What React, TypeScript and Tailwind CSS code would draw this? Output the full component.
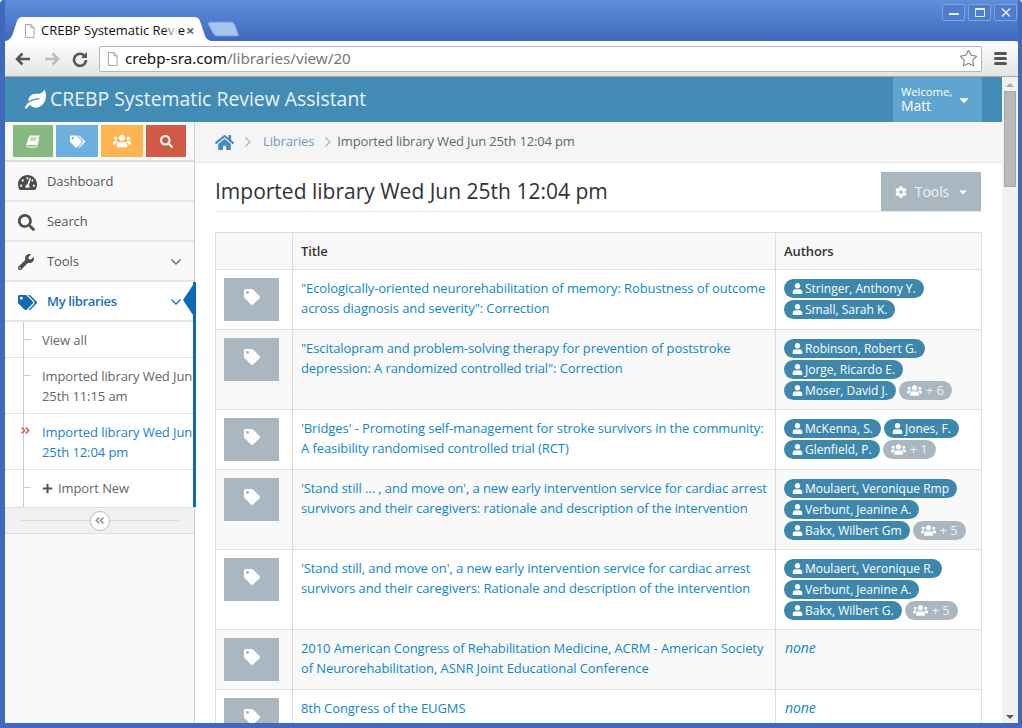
import { FaAngleDoubleLeft, FaAngleDoubleRight, FaCaretDown, FaCog, FaHome, FaLeaf, FaPlus, FaSearch, FaTachometerAlt, FaTag, FaTags, FaUser, FaUsers, FaWrench } from "react-icons/fa";
import { Star } from "lucide-react";
import type { ReactNode } from "react";

interface Row {
  title: string[];
  authors: string[][];
  more?: number;
  h: string;
}

const rows: Row[] = [
  {
    title: ['"Ecologically-oriented neurorehabilitation of memory: Robustness of outcome', 'across diagnosis and severity": Correction'],
    authors: [["Stringer, Anthony Y."], ["Small, Sarah K."]],
    h: "h-[60px]",
  },
  {
    title: ['"Escitalopram and problem-solving therapy for prevention of poststroke', 'depression: A randomized controlled trial": Correction'],
    authors: [["Robinson, Robert G."], ["Jorge, Ricardo E."], ["Moser, David J."]],
    more: 6,
    h: "h-[80px]",
  },
  {
    title: ["'Bridges' - Promoting self-management for stroke survivors in the community:", "A feasibility randomised controlled trial (RCT)"],
    authors: [["McKenna, S.", "Jones, F."], ["Glenfield, P."]],
    more: 1,
    h: "h-[60px]",
  },
  {
    title: ["'Stand still ... , and move on', a new early intervention service for cardiac arrest", "survivors and their caregivers: rationale and description of the intervention"],
    authors: [["Moulaert, Veronique Rmp"], ["Verbunt, Jeanine A."], ["Bakx, Wilbert Gm"]],
    more: 5,
    h: "h-[80px]",
  },
  {
    title: ["'Stand still, and move on', a new early intervention service for cardiac arrest", "survivors and their caregivers: Rationale and description of the intervention"],
    authors: [["Moulaert, Veronique R."], ["Verbunt, Jeanine A."], ["Bakx, Wilbert G."]],
    more: 5,
    h: "h-[80px]",
  },
  {
    title: ["2010 American Congress of Rehabilitation Medicine, ACRM - American Society", "of Neurorehabilitation, ASNR Joint Educational Conference"],
    authors: [],
    h: "h-[60px]",
  },
  {
    title: ["8th Congress of the EUGMS"],
    authors: [],
    h: "h-[60px]",
  },
];

const PageIcon = ({ className }: { className: string }) => (
  <svg viewBox="0 0 12 15" className={className} fill="#fff" stroke="#9a9a9a">
    <path d="M1.5.5h6l3.5 3.5v10.500h-9.500zM7.500.5v3.500h3.500" />
  </svg>
);

const ChevronDown = ({ color }: { color: string }) => (
  <svg width="10" height="6" viewBox="0 0 10 6" fill="none" stroke={color} strokeWidth="1.300">
    <path d="M.5.500L5 5l4.500-4.500" />
  </svg>
);

const ChevronRight = () => (
  <svg width="6" height="10" viewBox="0 0 6 10" fill="none" stroke="#b0b0b0" strokeWidth="1.200">
    <path d="M.5.500L5 5 .5 9.500" />
  </svg>
);

const Badge = ({ name }: { name: string }) => (
  <span className="inline-flex h-[19px] items-center gap-[2px] rounded-full bg-[#3d87ad] pl-[8px] pr-[8px] text-[12px] tracking-normal text-white">
    <FaUser className="text-[11px]" />
    {name}
  </span>
);

const NavItem = ({ icon, label, chevron }: { icon: ReactNode; label: string; chevron?: boolean }) => (
  <div className="flex h-[40px] items-center border-b-2 border-[#e6e6e6] pl-[13px] pr-[13px] pt-[2px] text-[13px] text-[#555]">
    <span className="flex w-[29px] text-[19px] text-[#4d4d4d]">{icon}</span>
    <span className="flex-1">{label}</span>
    {chevron && <ChevronDown color="#666" />}
  </div>
);

const SubItem = ({ children, active }: { children: ReactNode; active?: boolean }) => (
  <div className={`relative whitespace-nowrap border-b border-dotted border-[#ccc] pb-[7px] pl-[37px] pt-[8px] leading-[20px] ${active ? "text-[#1a7fd0]" : "text-[#666]"}`}>
    {active ? (
      <FaAngleDoubleRight className="absolute left-[15px] top-[11px] text-[11px] text-[#d9694f]" />
    ) : (
      <span className="absolute left-[18px] top-[17px] h-px w-[8px] bg-[#c4ccd2]" />
    )}
    {children}
  </div>
);

const App = () => {
  return (
    <div className="flex h-[728px] w-[1022px] flex-col overflow-hidden rounded-t-[4px] border-b-[5px] border-l-[5px] border-r-[4px] border-[#3f69bd] bg-[#3f69bd] font-['Open_Sans',sans-serif] text-[13px] tracking-[-0.09px]">
      {/* window title bar with tabs */}
      <div className="relative flex h-[41px] shrink-0 items-start justify-end bg-gradient-to-b from-[#5f8edb] to-[#3f69bd] pr-[1px] pt-[4px]">
        <svg className="absolute -left-[5px] top-[15px]" width="245" height="26" viewBox="0 0 245 26">
          <path d="M4 26C9 26 12 23 14 15L17 6C18 3 20 2 24 2H193C197 2 199 3 200 6L204 18C206 24 208 26 213 26Z" fill="#fff" />
          <path d="M208 9C208 8 209 7 211 7H230C233 7 234 8 235 10L239 21H217C215 21 214 20 213 18Z" fill="#a8c5ef" stroke="#6f96d8" />
        </svg>
        <div className="absolute left-[19px] top-[21px] flex w-[172px] items-center">
          <PageIcon className="mr-[6px] h-[14px] w-[11px] shrink-0" />
          <span className="relative w-[137px] whitespace-nowrap text-[13px] tracking-normal text-[#111]">
            CREBP Systematic Revie
            <span className="absolute right-0 top-0 h-full w-[14px] bg-gradient-to-r from-transparent to-white" />
          </span>
          <span className="ml-[8px] text-[15px] font-bold leading-none text-[#666]">×</span>
        </div>
        <div className="flex gap-[3px]">
          {["min", "max", "close"].map((b) => (
            <div key={b} className="flex h-[17px] w-[23px] items-center justify-center rounded-[2px] border border-[#7fa2e0] bg-[#4f7ccb]">
              {b === "min" && <span className="mt-[3px] h-[2px] w-[10px] bg-[#e6eefb]" />}
              {b === "max" && <span className="h-[9px] w-[10px] rounded-[1px] border border-t-2 border-[#e6eefb]" />}
              {b === "close" && (
                <svg width="10" height="9" viewBox="0 0 10 9" stroke="#e6eefb" strokeWidth="1.500">
                  <path d="M1 0.500L9 8.500M9 0.500L1 8.500" />
                </svg>
              )}
            </div>
          ))}
        </div>
      </div>

      {/* browser toolbar */}
      <div className="flex h-[36px] shrink-0 items-center rounded-tr-[2px] border-b border-[#a8a8a8] bg-gradient-to-b from-[#ffffff] to-[#e4e4e4] pl-[9px] pr-[11px]">
        <svg width="18" height="16" viewBox="0 0 18 16" fill="none" stroke="#555" strokeWidth="2.500">
          <path d="M16 8H3M8.500 2.500L3 8l5.500 5.500" />
        </svg>
        <svg className="ml-[11px]" width="18" height="16" viewBox="0 0 18 16" fill="none" stroke="#bdbdbd" strokeWidth="2.500">
          <path d="M2 8h13M9.500 2.500L15 8l-5.500 5.500" />
        </svg>
        <svg className="ml-[11px]" width="16" height="16" viewBox="0 0 16 16" fill="none" stroke="#555" strokeWidth="2.600">
          <path d="M13 5.500A6 6 0 1 0 14 9" />
          <path d="M15 1v6H9z" fill="#555" stroke="none" />
        </svg>
        <div className="ml-[11px] flex h-[26px] flex-1 items-center rounded-[2px] border border-[#b5b5b5] bg-white pl-[7px] pr-[3px] font-['Noto_Sans',sans-serif] text-[15.200px] tracking-normal">
          <PageIcon className="mr-[7px] h-[14px] w-[11px]" />
          <span className="text-[#111]">crebp-sra.com</span>
          <span className="text-[#777]">/libraries/view/20</span>
          <Star className="ml-auto h-[19px] w-[19px] text-[#777]" strokeWidth={1.300} />
        </div>
        <div className="ml-[12px] flex w-[13px] flex-col gap-[2px]">
          <span className="h-[3px] rounded-sm bg-[#555]" />
          <span className="h-[3px] rounded-sm bg-[#555]" />
          <span className="h-[3px] rounded-sm bg-[#555]" />
        </div>
      </div>

      <div className="flex min-h-0 flex-1 bg-white">
        <div className="flex min-w-0 flex-1 flex-col">
          {/* app header */}
          <div className="flex h-[45px] shrink-0 items-center bg-[#428bb5] pl-[20px] pr-[20px] text-white">
            <FaLeaf className="mr-[4px] text-[21px]" />
            <span className="flex-1 pb-[1px] text-[19.400px] tracking-normal text-[#e8f3f9]">CREBP Systematic Review Assistant</span>
            <div className="flex h-[45px] w-[89px] items-center bg-[#60a5cf] pl-[8px]">
              <div className="flex-1">
                <div className="text-[11.200px] leading-[12px] tracking-normal">Welcome,</div>
                <div className="text-[14px] leading-[16px]">Matt</div>
              </div>
              <FaCaretDown className="mr-[11px] text-[14px]" />
            </div>
          </div>

          <div className="flex min-h-0 flex-1">
            {/* sidebar */}
            <div className="flex w-[190px] shrink-0 flex-col border-r border-[#d0d0d0] bg-[#f9f9f9]">
              <div className="flex h-[40px] items-center gap-[3px] border-b-2 border-[#dcdcdc] pl-[8px] text-white">
                <div className="flex h-[32px] w-[40px] items-center justify-center bg-[#86b97f]">
                  <svg width="14" height="13" viewBox="0 0 14 13" fill="none">
                    <path d="M3.500 0.500H13.500L10.500 10H1C0 10 0.500 9 1 7.500Z" fill="#fff" />
                    <path d="M1 10C0.500 11.500 1 12 2 12H10.500L13 4" stroke="#fff" strokeWidth="1" />
                    <path d="M4.500 3H10.500M4 5H10" stroke="#86b97f" />
                  </svg>
                </div>
                <div className="flex h-[32px] w-[42px] items-center justify-center bg-[#6bb0de]">
                  <FaTags className="text-[15px]" />
                </div>
                <div className="flex h-[32px] w-[42px] items-center justify-center bg-[#ffb54f]">
                  <FaUsers className="text-[18px]" />
                </div>
                <div className="flex h-[32px] w-[40px] items-center justify-center bg-[#d05a46]">
                  <FaSearch className="text-[13px]" />
                </div>
              </div>
              <NavItem icon={<FaTachometerAlt />} label="Dashboard" />
              <NavItem icon={<FaSearch className="text-[17px]" />} label="Search" />
              <NavItem icon={<FaWrench className="text-[16px]" />} label="Tools" chevron />
              <div className="relative -mr-[2px] border-r-[3px] border-[#0f6ab4] bg-white">
                <div className="flex h-[40px] items-center border-b-2 border-[#e6e6e6] pl-[13px] pr-[12px] pt-[2px] font-semibold tracking-[-0.35px] text-[#1a6fb5]">
                  <FaTags className="w-[29px] pr-[10px] text-[19px] text-[#0f6ab4]" />
                  <span className="flex-1">My libraries</span>
                  <ChevronDown color="#1a6fb5" />
                </div>
                <span className="absolute right-0 top-[3px] h-0 w-0 border-y-[15px] border-r-[10px] border-y-transparent border-r-[#0f6ab4]" />
                <div className="relative">
                  <span className="absolute bottom-0 left-[18px] top-0 w-px bg-[#c4ccd2]" />
                  <SubItem>View all</SubItem>
                  <SubItem>
                    Imported library Wed Jun
                    <br />
                    25th 11:15 am
                  </SubItem>
                  <SubItem active>
                    Imported library Wed Jun
                    <br />
                    25th 12:04 pm
                  </SubItem>
                  <div className="relative flex h-[37px] items-center gap-[5px] pl-[37px] text-[#666]">
                    <span className="absolute left-[18px] top-[17px] h-px w-[8px] bg-[#c4ccd2]" />
                    <FaPlus className="text-[11px] text-[#555]" />
                    Import New
                  </div>
                </div>
              </div>
              <div className="relative flex h-[27px] items-center justify-center border-y border-[#dedede] bg-[#f1f1f1]">
                <span className="mx-[15px] h-px flex-1 bg-[#dcdcdc]" />
                <span className="absolute flex h-[20px] w-[20px] items-center justify-center rounded-full border border-[#bbb] bg-white text-[11px] text-[#999]">
                  <FaAngleDoubleLeft />
                </span>
              </div>
            </div>

            {/* main column */}
            <div className="min-w-0 flex-1 overflow-hidden">
              <div className="flex h-[41px] items-center border-b border-[#e5e5e5] bg-[#f5f5f5] pl-[20px] tracking-[-0.15px] text-[#666]">
                <FaHome className="text-[19px] text-[#4a8ab8]" />
                <span className="ml-[11px] mr-[12px]">
                  <ChevronRight />
                </span>
                <span className="text-[#6a9cc4]">Libraries</span>
                <span className="ml-[11px] mr-[6px]">
                  <ChevronRight />
                </span>
                <span>Imported library Wed Jun 25th 12:04 pm</span>
              </div>
              <div className="px-[20px]">
                <div className="flex h-[49px] items-end justify-between border-b border-[#e5e5e5]">
                  <h1 className="pb-[5px] text-[21px] leading-[30px] tracking-normal text-[#333]">Imported library Wed Jun 25th 12:04 pm</h1>
                  <div className="mr-[1px] flex h-[39px] w-[100px] items-center justify-center gap-[8px] bg-[#aab7c1] pl-[2px] text-[14px] text-[#eef2f4]">
                    <FaCog className="text-[12px] text-white" />
                    Tools
                    <FaCaretDown className="text-[12px] text-white" />
                  </div>
                </div>
                <div className="mt-[20px] border border-b-0 border-[#ddd]">
                  <div className="flex h-[37px] border-b border-[#ddd] bg-[#f9f9f9] font-semibold text-[#333]">
                    <div className="w-[77px] shrink-0 border-r border-[#ddd]" />
                    <div className="flex w-[483px] shrink-0 items-center border-r border-[#ddd] pl-[8px] pt-[1px]">Title</div>
                    <div className="flex flex-1 items-center pl-[8px] pt-[1px]">Authors</div>
                  </div>
                  {rows.map((row, i) => (
                    <div key={row.title[0]} className={`flex border-b border-[#ddd] ${row.h} ${i % 2 ? "bg-[#f9f9f9]" : "bg-white"}`}>
                      <div className="w-[77px] shrink-0 border-r border-[#ddd] pl-[8px] pt-[8px]">
                        <div className="flex h-[43px] w-[55px] items-center justify-center bg-[#aab7c1] pb-[5px] text-white">
                          <FaTag className="text-[16px]" />
                        </div>
                      </div>
                      <div className="w-[483px] shrink-0 whitespace-nowrap border-r border-[#ddd] pl-[8px] pt-[8px] leading-[20px] text-[#0e87c9]">
                        {row.title.map((line) => (
                          <div key={line}>{line}</div>
                        ))}
                      </div>
                      <div className="flex-1 pl-[8px] pt-[8px]">
                        {row.authors.length === 0 && <em className="ml-[1px] text-[14px] leading-[20px] text-[#0e87c9]">none</em>}
                        <div className="mt-[1px] flex flex-col gap-[2px]">
                          {row.authors.map((line, j) => (
                            <div key={line[0]} className="flex gap-[3px]">
                              {line.map((name) => (
                                <Badge key={name} name={name} />
                              ))}
                              {j === row.authors.length - 1 && row.more && (
                                <span className="inline-flex h-[19px] items-center gap-[4px] rounded-full bg-[#aab7c1] px-[8px] text-[13px] text-[#eef2f4]">
                                  <FaUsers className="text-[15px] text-white" />+ {row.more}
                                </span>
                              )}
                            </div>
                          ))}
                        </div>
                      </div>
                    </div>
                  ))}
                </div>
              </div>
            </div>
          </div>
        </div>

        {/* page scrollbar */}
        <div className="flex w-[16px] shrink-0 flex-col items-center bg-[#f1f1f1] pt-[6px]">
          <span className="h-0 w-0 border-x-[4px] border-b-[4px] border-x-transparent border-b-[#aaa]" />
          <span className="mt-[4px] h-[96px] w-[12px] border border-[#a8a8a8] bg-[#b9b9b9]" />
          <span className="mb-[4px] mt-auto h-0 w-0 border-x-[4px] border-t-[4px] border-x-transparent border-t-[#555]" />
        </div>
      </div>
    </div>
  );
};

export default App;
